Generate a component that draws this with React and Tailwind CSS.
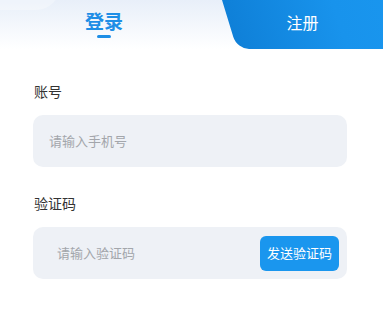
import React, { useState } from "react";

const font = { fontFamily: '"Noto Sans CJK SC", "Noto Sans", sans-serif' };

const AuthTabs = ({ active, onChange }) => (
  <div className="relative flex h-[49px] overflow-hidden bg-gradient-to-b from-[#e8eff9] to-white">
    {/* soft highlight in the top-left corner */}
    <div className="absolute -left-[50px] -top-[38px] h-[48px] w-[110px] rounded-full bg-white/30" />
    <button
      type="button"
      onClick={() => onChange("login")}
      className="relative flex w-[208px] flex-col items-center pt-[9px]"
    >
      <span className="text-[19px] font-bold leading-[24px] text-[#1e8ee6]">登录</span>
      <span className="mt-[2px] h-[3px] w-[14px] rounded-full bg-[#1e8ee6]" />
    </button>
    <button
      type="button"
      onClick={() => onChange("register")}
      className="relative ml-[14px] flex flex-1 items-start justify-center pt-[11px]"
    >
      <span className="absolute left-0 top-0 h-full w-[220px] origin-top skew-x-[17deg] rounded-bl-[12px] bg-gradient-to-r from-[#0f80d8] via-[#1893ec] to-[#1a98f0]" />
      <span className="relative text-[16px] leading-[22px] text-white">注册</span>
    </button>
  </div>
);

export default function App() {
  const [tab, setTab] = useState("login");
  const [phone, setPhone] = useState("");
  const [code, setCode] = useState("");

  return (
    <div className="h-[321px] w-[383px] bg-white" style={font}>
      <AuthTabs active={tab} onChange={setTab} />

      <div className="pl-[33px] pr-[36px] pt-[33px]">
        <label className="block pl-[1px] text-[14px] leading-[18px] text-[#333]">账号</label>
        <div className="mt-[15px] flex h-[52px] items-center rounded-[10px] bg-[#eef1f6] px-[16px]">
          <input
            type="text"
            value={phone}
            onChange={(e) => setPhone(e.target.value)}
            placeholder="请输入手机号"
            className="w-full bg-transparent text-[13px] text-[#333] outline-none placeholder:text-[#a3a6ab]"
          />
        </div>

        <label className="mt-[27px] block pl-[1px] text-[14px] leading-[18px] text-[#333]">验证码</label>
        <div className="mt-[15px] flex h-[52px] items-center rounded-[10px] bg-[#eef1f6] pl-[24px] pr-[8px]">
          <input
            type="text"
            value={code}
            onChange={(e) => setCode(e.target.value)}
            placeholder="请输入验证码"
            className="min-w-0 flex-1 bg-transparent text-[13px] text-[#333] outline-none placeholder:text-[#a3a6ab]"
          />
          <button
            type="button"
            className="h-[35px] w-[79px] shrink-0 rounded-[6px] bg-[#1a96ee] text-[13px] text-white"
          >
            发送验证码
          </button>
        </div>
      </div>
    </div>
  );
}
